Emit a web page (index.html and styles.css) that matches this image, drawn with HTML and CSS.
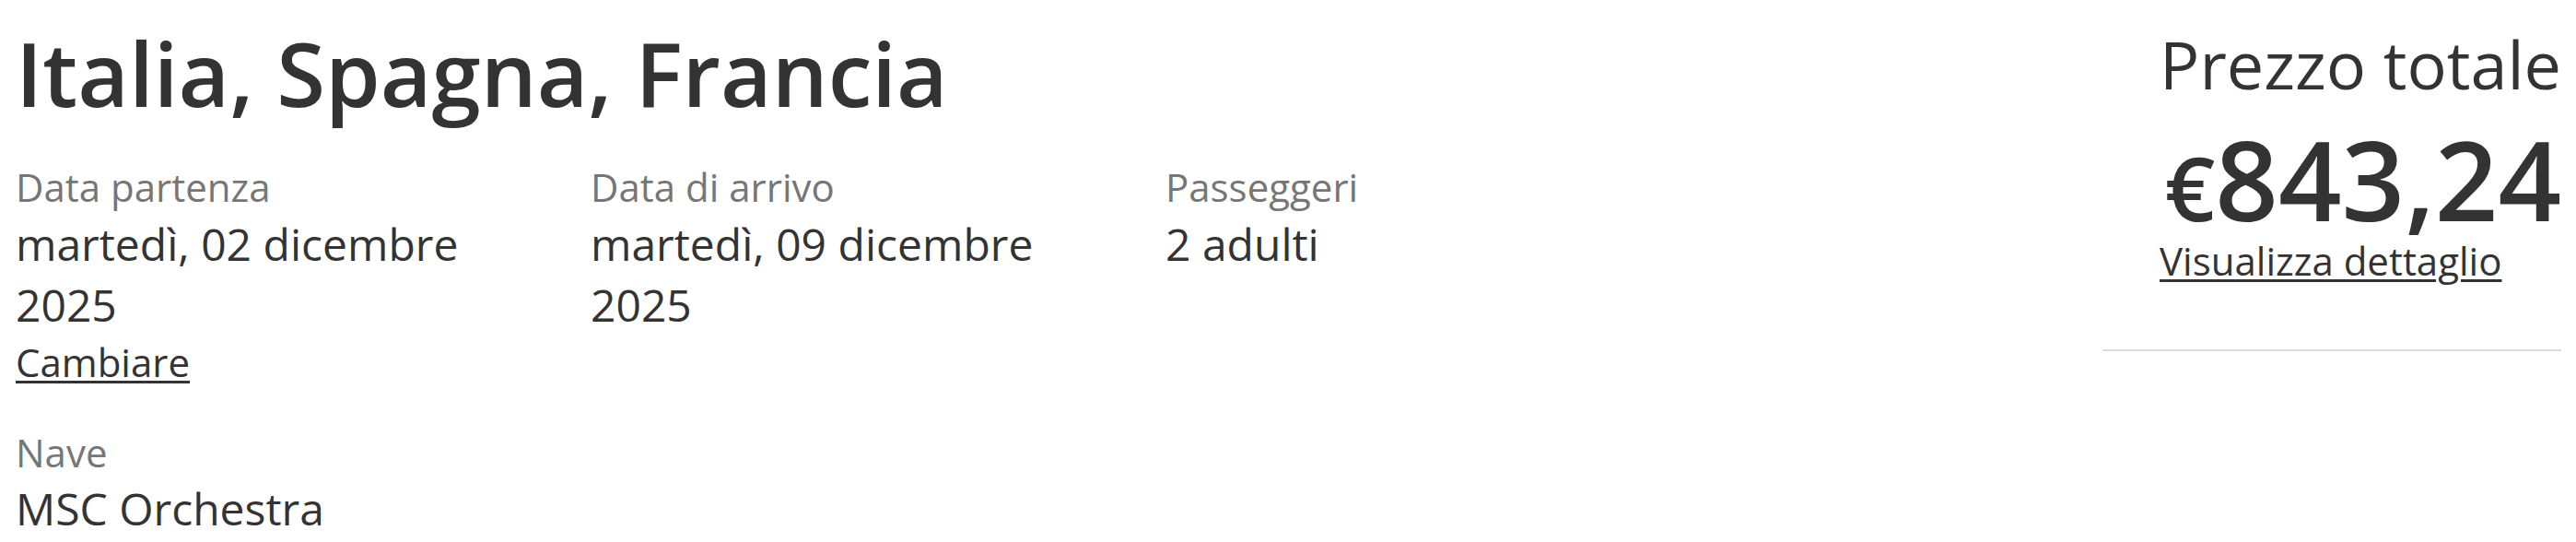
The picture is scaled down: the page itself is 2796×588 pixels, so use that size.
FILE: index.html
```html
<!DOCTYPE html>
<html lang="it">
<head>
    <meta charset="UTF-8">
    <meta name="viewport" content="width=device-width, initial-scale=1.0">
    <title>Riepilogo crociera</title>
    <link rel="stylesheet" href="styles.css">
</head>
<body>
    <div class="trip">
        <div class="trip-main">
            <h1 class="trip-title">Italia, Spagna, Francia</h1>
            <div class="trip-facts">
                <div class="fact">
                    <div class="fact-label">Data partenza</div>
                    <div class="fact-value">martedì, 02 dicembre 2025</div>
                    <a class="fact-link" href="#">Cambiare</a>
                </div>
                <div class="fact">
                    <div class="fact-label">Data di arrivo</div>
                    <div class="fact-value">martedì, 09 dicembre 2025</div>
                </div>
                <div class="fact">
                    <div class="fact-label">Passeggeri</div>
                    <div class="fact-value">2 adulti</div>
                </div>
            </div>
            <div class="fact fact-ship">
                <div class="fact-label">Nave</div>
                <div class="fact-value">MSC Orchestra</div>
            </div>
        </div>
        <aside class="trip-price">
            <div class="price-box">
                <div class="price-label">Prezzo totale</div>
                <div class="price-amount"><span class="price-currency">€</span>843,24</div>
                <a class="price-link" href="#">Visualizza dettaglio</a>
            </div>
            <hr class="price-rule">
        </aside>
    </div>
</body>
</html>
```

FILE: styles.css
```css
/* Global */
body {
    margin: 0;
    font-family: "Open Sans", "Noto Sans", sans-serif;
    line-height: 1.375;
    color: #333;
    background: #fff;
}

.trip {
    display: flex;
    justify-content: space-between;
    padding: 0 16px 0 17px;
}

/* Left column */
.trip-main {
    padding-top: 13px;
}
.trip-title {
    margin: 0 0 29px;
    font-size: 96px;
    font-weight: 600;
    line-height: 1.375;
    color: #333;
}
.trip-facts {
    display: grid;
    grid-template-columns: repeat(3, 624px);
}
.fact {
    padding-right: 40px;
}
.fact-label {
    font-size: 42px;
    color: #767676;
}
.fact-value {
    font-size: 48px;
    color: #333;
}
.fact-link,
.price-link {
    font-size: 42px;
    color: #333;
    text-decoration: underline;
    text-decoration-thickness: 3px;
    text-underline-offset: 4px;
}
.fact-ship {
    margin-top: 40px;
}

/* Price panel */
.trip-price {
    width: 498px;
    padding-top: 20px;
    display: flex;
    flex-direction: column;
    align-items: flex-end;
}
.price-box {
    display: flex;
    flex-direction: column;
    align-items: flex-end;
}
.price-label {
    font-size: 72px;
    margin-bottom: 15px;
}
.price-amount {
    font-size: 120px;
    font-weight: 600;
    line-height: 1;
}
.price-currency {
    font-size: 96px;
}
.price-link {
    align-self: flex-start;
}
.price-rule {
    width: 100%;
    margin: 67px 0 0;
    border: 0;
    border-top: 2px solid #dadada;
}
```
